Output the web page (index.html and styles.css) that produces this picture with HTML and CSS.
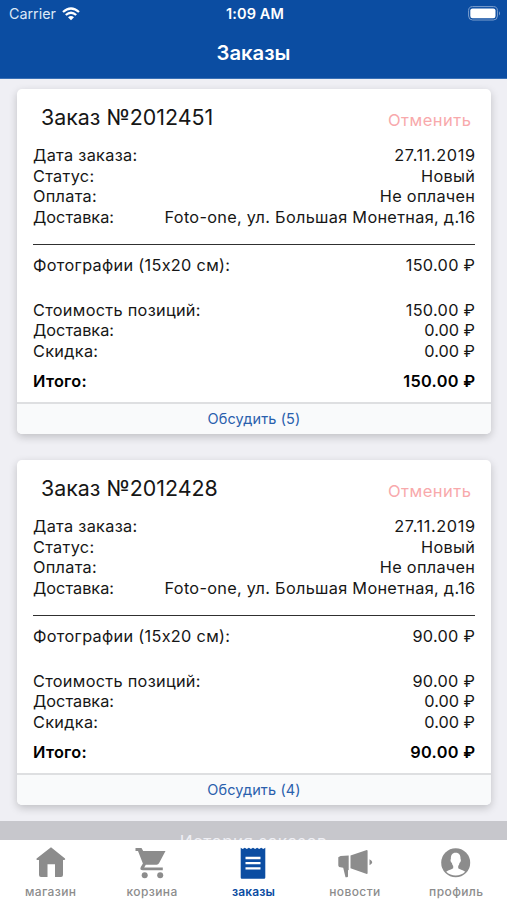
FILE: index.html
```html
<!DOCTYPE html>
<html lang="ru">
<head>
<meta charset="utf-8">
<meta name="viewport" content="width=device-width, initial-scale=1">
<title>Заказы</title>
<link rel="stylesheet" href="styles.css">
</head>
<body>
<div class="app">
  <header class="header">
    <div class="status">
      <div class="carrier"><span class="carrier-name">Carrier</span>
        <svg class="wifi" width="18" height="14" viewBox="0 0 18 14" fill="none" stroke="#fff" stroke-width="2.3"><path d="M1 5Q9-2 17 5M3.8 8Q9 3.4 14.2 8"/><path d="M6 10.2Q9 7.6 12 10.2L9 13.2Z" fill="#fff" stroke="none"/></svg>
      </div>
      <time class="clock">1:09 AM</time>
      <svg class="battery" width="33" height="15" viewBox="0 0 33 15"><rect x=".6" y=".6" width="28.8" height="13.4" rx="4" fill="none" stroke="#7d9fce"/><rect x="2.3" y="2.4" width="25.2" height="9.8" rx="2.2" fill="#fff"/><path d="M31 5.2q2 2.1 0 4.2z" fill="#7d9fce"/></svg>
    </div>
    <h1 class="title"><span class="title-text">Заказы</span></h1>
  </header>
  <main class="orders">
    <article class="card">
      <div class="card-head"><h2 class="order-name"><span class="order-text">Заказ №2012451</span></h2><span class="cancel">Отменить</span></div>
      <dl class="rows">
        <div class="row"><dt>Дата заказа:</dt><dd class="date">27.11.2019</dd></div>
        <div class="row"><dt>Статус:</dt><dd>Новый</dd></div>
        <div class="row"><dt>Оплата:</dt><dd>Не оплачен</dd></div>
        <div class="row"><dt class="plain">Доставка:</dt><dd class="address">Foto-one, ул. Большая Монетная, д.16</dd></div>
      </dl>
      <dl class="rows items"><div class="row"><dt>Фотографии (15x20 см):</dt><dd>150.00 ₽</dd></div></dl>
      <dl class="rows costs">
        <div class="row"><dt>Стоимость позиций:</dt><dd>150.00 ₽</dd></div>
        <div class="row"><dt class="plain">Доставка:</dt><dd class="plain">0.00 ₽</dd></div>
        <div class="row"><dt>Скидка:</dt><dd class="plain">0.00 ₽</dd></div>
        <div class="row total"><dt>Итого:</dt><dd>150.00 ₽</dd></div>
      </dl>
      <div class="discuss"><span>Обсудить (5)</span></div>
    </article>
    <article class="card">
      <div class="card-head"><h2 class="order-name"><span class="order-text">Заказ №2012428</span></h2><span class="cancel">Отменить</span></div>
      <dl class="rows">
        <div class="row"><dt>Дата заказа:</dt><dd class="date">27.11.2019</dd></div>
        <div class="row"><dt>Статус:</dt><dd>Новый</dd></div>
        <div class="row"><dt>Оплата:</dt><dd>Не оплачен</dd></div>
        <div class="row"><dt class="plain">Доставка:</dt><dd class="address">Foto-one, ул. Большая Монетная, д.16</dd></div>
      </dl>
      <dl class="rows items"><div class="row"><dt>Фотографии (15x20 см):</dt><dd>90.00 ₽</dd></div></dl>
      <dl class="rows costs">
        <div class="row"><dt>Стоимость позиций:</dt><dd>90.00 ₽</dd></div>
        <div class="row"><dt class="plain">Доставка:</dt><dd class="plain">0.00 ₽</dd></div>
        <div class="row"><dt>Скидка:</dt><dd class="plain">0.00 ₽</dd></div>
        <div class="row total"><dt>Итого:</dt><dd>90.00 ₽</dd></div>
      </dl>
      <div class="discuss"><span>Обсудить (4)</span></div>
    </article>
    <div class="history"><span>История заказов</span></div>
  </main>
  <nav class="tabs">
    <a class="tab"><svg width="36" height="36" viewBox="0 0 36 36"><path d="M18 3.3L32 14.5q.8 1.3-.8 1.5H30v15q0 2-2 2h-6V20.3h-7.500V33H8q-2 0-2-2V16H4.300q-1.500-.2-.7-1.500z"/></svg><span>магазин</span></a>
    <a class="tab"><svg width="36" height="36" viewBox="0 0 36 36"><path d="M1.500 4h6L9.200 7H31.500L25 19.300q-.8 1.400-2.300 1.400H11.800L10.200 23.500H28.800v2.800H9q-3.700-.1-2.200-3.300l2.100-3.600L4 7H1.500z"/><circle cx="10.700" cy="31.200" r="3"/><circle cx="26.200" cy="31.200" r="3"/></svg><span>корзина</span></a>
    <a class="tab active"><svg width="36" height="36" viewBox="0 0 36 36"><path d="M5.700 3.700l2 1.300 2.100-1.300 2 1.300 2.100-1.300L15.900 5 18 3.700 20.100 5l2-1.300 2.100 1.300 2-1.300 2.100 1.300 2-1.300V33.500q0 1.200-1.200 1.200H6.900q-1.200 0-1.200-1.200z"/><path d="M10.500 14h15M10.500 19.200h15M10.500 24.400h15" stroke="#fff" stroke-width="2.300"/></svg><span>заказы</span></a>
    <a class="tab"><svg width="36" height="36" viewBox="0 0 36 36"><path d="M13.500 11.600L29.800 6q.8 0 .8 1v22q0 1-.8.900l-16.300-5.600zM1.300 13.300l2.200-1.300 8.200-.5v14.500l-.7.300v5.900q0 1-1 1H8.500L6.200 23.800l-4.200-.7-.7-1.600zM32.500 15.300q5.500 3 0 6z"/></svg><span>новости</span></a>
    <a class="tab"><svg width="36" height="36" viewBox="0 0 36 36"><circle cx="17.700" cy="18.700" r="14.500"/><path d="M17.700 8.700c-4 0-5 3-4.800 6.300-1 1.400.1 3.400 1 4q.3 2 1.300 3v2.200c-1.300 1.300-4.500 1.300-7 3.600a14 14 0 0 0 19 0c-2.500-2.300-5.700-2.300-7-3.600V22q1-1 1.300-3c.9-.6 2-2.600 1-4 .2-3.300-.8-6.300-4.800-6.300z" fill="#fff"/></svg><span>профиль</span></a>
  </nav>
</div>
</body>
</html>
```

FILE: styles.css
```css
* { box-sizing: border-box; }
body { margin: 0; font-family: Inter, "Liberation Sans", sans-serif; color: #161616; }
h1, h2, dl, dd { margin: 0; }
.app { height: 900px; display: flex; flex-direction: column; overflow: hidden; background: #efeff4; }
.header { flex: none; height: 79px; background: #0b4da2; color: #fff; border-bottom: 1px solid #3a70b5; }
.status { height: 27px; padding: 0 6px 0 9px; display: grid; grid-template-columns: 1fr auto 1fr; align-items: center; }
.carrier { display: flex; align-items: center; gap: 6px; font-size: 14.300px; color: #dce8f7; }
.clock { font-size: 14.500px; font-weight: 600; letter-spacing: .1px; }
.battery { justify-self: end; }
.title { height: 51px; display: flex; align-items: center; justify-content: center; font-size: 20.300px; font-weight: 600; }
.orders { flex: 1; min-height: 0; overflow: hidden; padding-top: 10px; }
.card { height: 345px; margin: 0 16px 26px 17px; background: #fff; border-radius: 5px; box-shadow: 0 3px 9px rgba(0,0,0,.2); display: flex; flex-direction: column; overflow: hidden; }
.card-head { height: 56px; padding: 0 20px 0 24px; display: flex; justify-content: space-between; align-items: center; }
.order-name { font-size: 21.400px; font-weight: 400; }
.cancel { font-size: 16.500px; color: #f8a9ab; padding-top: 6px; letter-spacing: .5px; margin-right: -.5px; }
.rows { margin: 0 16px; font-size: 16.300px; letter-spacing: .3px; }
.row { display: flex; justify-content: space-between; height: 20.700px; line-height: 20.700px; white-space: nowrap; }
.row dd { margin-right: -.3px; }
.row .plain { letter-spacing: 0; margin-right: 0; }
.row .date { letter-spacing: .6px; margin-right: -.6px; }
.items { margin-top: 16px; padding-top: 10px; border-top: 1.500px solid #303030; }
.costs { margin-top: 24.500px; }
.costs .row { height: 20.500px; line-height: 20.500px; }
.costs .total { font-weight: 600; margin-top: 10px; color: #000; }
.discuss { height: 32px; margin-top: auto; padding-bottom: 1px; border-top: 2px solid #dedfe1; background: #f9fafb; color: #2a60ad; display: flex; align-items: center; justify-content: center; font-size: 14.500px; letter-spacing: .12px; }
.history { height: 50px; margin-top: -10px; padding-top: 11px; background: #c7c7cc; color: #efeff4; text-align: center; font-size: 17px; letter-spacing: .5px; }
.tabs { flex: none; height: 60px; background: #fff; display: grid; grid-template-columns: repeat(5, 1fr); }
.tab { display: flex; flex-direction: column; align-items: center; padding-top: 4px; color: #8c8c8c; font-size: 12px; font-weight: 500; line-height: 15px; letter-spacing: .4px; }
.tab svg { display: block; fill: currentColor; }
.tab span { margin-top: 4px; }
.active { color: #0b4da2; font-weight: 600; letter-spacing: .1px; }
```
